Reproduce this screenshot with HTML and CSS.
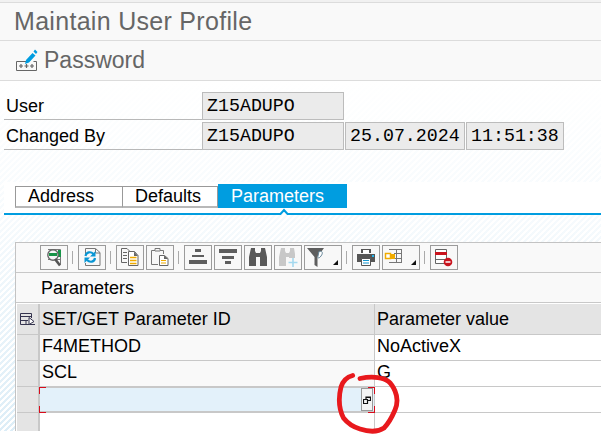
FILE: index.html
```html
<!DOCTYPE html>
<html lang="en">
<head>
<meta charset="utf-8">
<title>Maintain User Profile</title>
<link rel="stylesheet" href="styles.css">
</head>
<body>
<main class="window">
  <header class="titlebar"><h1>Maintain User Profile</h1></header>
  <div class="actions">
    <svg class="pw-icon" viewBox="0 0 22 22" width="22" height="22">
      <path d="M10 12.500H.5v9h20v-9h-3" fill="none" stroke="#666"/>
      <path d="M3 17h4M5 15v4M8.500 17h4M10.500 15v4M14 17h4M16 15v4" stroke="#666" stroke-width="1.200"/>
      <path d="M9 15l1-4 6.500-7 3 2.500-6.500 7zM17.500 2.500L19 .5l2.500 2.500-1.500 2z" fill="#009de0"/>
    </svg>
    <span>Password</span>
  </div>
  <section class="form">
    <div class="row"><label>User</label><span class="field name">Z15ADUPO</span></div>
    <div class="row"><label>Changed By</label><span class="field name">Z15ADUPO</span><span class="field date">25.07.2024</span><span class="field time">11:51:38</span></div>
  </section>
  <nav class="tabs">
    <div class="tab address"><span>Address</span></div>
    <div class="tab defaults"><span>Defaults</span></div>
    <div class="tab active"><span>Parameters</span></div>
    <svg class="notch" viewBox="0 0 10 7" width="10" height="7"><path d="M1 7l4-4.500L9 7z" fill="#fff"/><path d="M0 6h1.500L5 2l3.500 4H10" fill="none" stroke="#009de0" stroke-width="2"/></svg>
  </nav>
  <section class="panel">
    <div class="toolbar">
      <div class="btn"><svg viewBox="0 0 28 25"><path d="M8 4.500h12.500v15M8 7.500h13M8 14.500h13" stroke="#777" fill="none"/><path d="M18 5h3v7h-3z" fill="#169447"/><circle cx="13" cy="10" r="5.200" fill="#f6f6f6" stroke="#666" stroke-width="1.400"/><path d="M9 8h8v3H9z" fill="#169447"/><path d="M15 14l5 6.500" stroke="#555" stroke-width="2.600"/></svg></div>
      <i class="sep"></i>
      <div class="btn"><svg viewBox="0 0 28 25"><path d="M7.500 9V3.500h10l4.500 4v13H7.500V18M17.500 4v4H22" fill="none" stroke="#777"/><path d="M7.500 11c1-4 5-5 8-2M17 13c-.5 4-5 5-8 2" fill="none" stroke="#0996d4" stroke-width="2.200"/><path d="M17.500 6v5.500H12zM6.500 18v-5.500H12z" fill="#0996d4"/></svg></div>
      <i class="sep"></i>
      <div class="btn"><svg viewBox="0 0 28 25"><path d="M11 17.500H5.500v-14H11l2.500 2.500M7 7.500h4M7 10.500h4M7 13.500h4" fill="none" stroke="#666"/><path d="M12.500 6.500h6l3.500 4v10h-9.500z" fill="#fff" stroke="#666"/><path d="M18 6.500V11h4z" fill="#666"/><path d="M14 12.500h6.500M14 15.500h6.500M14 18.500h6.500" stroke="#f0ab00" stroke-width="1.500"/></svg></div>
      <div class="btn"><svg viewBox="0 0 28 25"><path d="M12 19.500H5.500v-14H9V3.500h5v2h3.500V9M9 6h5" fill="none" stroke="#777"/><path d="M13.500 10.500h5l3.500 3v7h-8.500z" fill="#fff" stroke="#666"/><path d="M18 10.500V14h4z" fill="#666"/><path d="M15 15.500h5M15 18h5" stroke="#f0ab00" stroke-width="1.200"/></svg></div>
      <i class="sep"></i>
      <div class="btn"><svg viewBox="0 0 28 25"><path d="M11 4h6v3h-6zM8 10h12v2H8zM5 15h18v4H5z" fill="#5e5e5e"/></svg></div>
      <div class="btn"><svg viewBox="0 0 28 25"><path d="M5 4h18v4H5zM8 11h12v3H8zM11 16h6v3h-6z" fill="#5e5e5e"/></svg></div>
      <div class="btn"><svg viewBox="0 0 28 25"><path d="M7 3h4v3l1 2h4l1-2V3h4l2 9v9h-7v-9h-4v9H5v-9z" fill="#595959"/></svg></div>
      <div class="btn"><svg viewBox="0 0 28 25"><path d="M7 3h4v3l1 2h3l1-2V3h4l1 6v4h-6v-1h-3v9H5v-9z" fill="#c8c8c8"/><path d="M19 13v9M14.500 17.500h9" stroke="#a5d9ef" stroke-width="1.600"/></svg></div>
      <div class="btn wide"><svg viewBox="0 0 38 25"><path d="M3 3h17l-6.500 9v10l-3-2v-8z" fill="#5e5e5e"/><path d="M15 6.500c4-1 4 2 2 4.500-2 3-4 2-3 0z" fill="#fff" stroke="#678799"/><path d="M34 15v5h-5z" fill="#111"/></svg></div>
      <i class="sep"></i>
      <div class="btn"><svg viewBox="0 0 28 25"><path d="M9 4h10v4H9zM5 9h18v8H5z" fill="#555"/><path d="M11 5h6v3h-6z" fill="#fff"/><path d="M9.500 13.500h9v7h-9z" fill="#fff" stroke="#555"/><path d="M11 15.500h6M11 18h6" stroke="#1496cf" stroke-width="1.200"/><path d="M20 11h2" stroke="#25b5ed" stroke-width="2"/></svg></div>
      <div class="btn wide"><svg viewBox="0 0 38 25"><path d="M7 4.500h13M12 8.500h8M12 13.500h8M7 17.500h13M14.500 4v14M19.500 4v14" fill="none" stroke="#777"/><path d="M3.500 8.500h5v5h-5z" fill="#fff" stroke="#f0ab00" stroke-width="1.500"/><path d="M8 9h5v5H8z" fill="#f0ab00"/><path d="M34 15v5h-5z" fill="#111"/></svg></div>
      <i class="sep"></i>
      <div class="btn"><svg viewBox="0 0 28 25"><path d="M5.500 4.500h11v14h-11zM6 14.500h10" fill="#fff" stroke="#666"/><path d="M5 7h12v3H5z" fill="#c9141e"/><circle cx="18" cy="17" r="4.300" fill="#c9141e"/><path d="M15.500 17h5" stroke="#fff" stroke-width="1.500"/></svg></div>
    </div>
    <div class="caption"><span>Parameters</span></div>
    <div class="grid head">
      <div class="select"><svg viewBox="0 0 16 14" width="16" height="14"><path d="M9 11.500H.5V.5h11V5M.5 3.500h11M.5 7.500H8M6 7.500v4M9 11.500h6" fill="none" stroke="#35344f"/><path d="M9 4.500l5 4-5 3z" fill="#fff" stroke="#35344f"/></svg></div>
      <div class="cell"><span>SET/GET Parameter ID</span></div><div class="cell"><span>Parameter value</span></div>
    </div>
    <div class="grid"><div class="select"></div><div class="cell key"><span>F4METHOD</span></div><div class="cell"><span>NoActiveX</span></div></div>
    <div class="grid"><div class="select"></div><div class="cell key"><span>SCL</span></div><div class="cell"><span>G</span></div></div>
    <div class="grid"><div class="select"></div>
      <div class="cell current"><div class="help"><svg viewBox="0 0 8 8" width="8" height="8"><path d="M.5 3.500h4v4h-4zM3 3V1h4.500v3.500H5M3 1.500h5" fill="none" stroke="#111" stroke-width="1.200"/></svg></div>
        <i class="corner tl"></i><i class="corner tr"></i><i class="corner bl"></i><i class="corner br"></i></div>
      <div class="cell"></div></div>
    <div class="grid last"><div class="select"></div><div class="cell"></div><div class="cell"></div></div>
  </section>
  <svg class="mark" viewBox="0 0 66 64" width="66" height="64"><path d="M17.700 5.500C12 7 8 10.500 6 17C3.500 27 3.500 38 8.500 48C14 55 20 57.500 25 59C34 62 43 62 49 58C55 52 57 47 60 40C63 33 63 28 60 21C56 12 52 9 43 7.700C37 6.500 32 7 25 8.500" fill="none" stroke="#e8191d" stroke-width="4.800" stroke-linecap="round" stroke-linejoin="round"/></svg>
</main>
</body>
</html>
```
FILE: styles.css
```css
* { box-sizing: border-box; }
body { margin: 0; overflow: hidden; font-family: "Liberation Sans", Arial, sans-serif; font-size: 18px; color: #000; }
.window {
  position: relative; width: 601px; height: 434px; overflow: hidden;
  background: linear-gradient(#fff 431px, #fff) 0 431px / 100% 3px no-repeat,
    linear-gradient(#fff 80px, rgba(255,255,255,.75) 220px, rgba(255,255,255,0) 434px),
    repeating-linear-gradient(135deg, #fff 0 2.120px, #dcedf7 2.120px 4.240px);
}
.titlebar { height: 41px; border-top: 2px solid #f1f1f1; border-bottom: 1px solid #dcdcdc; background: #f9f9f9; box-shadow: inset 0 1px #dcdcdc; padding-left: 14px; }
h1 { margin: 0; font-size: 25px; font-weight: 400; line-height: 38px; color: #666; letter-spacing: .3px; }
.actions { height: 40px; border-bottom: 1px solid #dcdcdc; background: #f9f9f9; display: flex; padding-left: 16px; gap: 6px; color: #666; font-size: 23px; line-height: 38px; }
.pw-icon { margin-top: 8px; }
.form { height: 101px; padding: 11px 0 0 4px; display: flex; flex-direction: column; gap: 2px; }
.row { height: 28px; display: flex; gap: 1px; }
.row label { width: 198px; margin-right: -1px; border-bottom: 1px solid #b8b8b8; padding-left: 2px; line-height: 28px; }
.field { border: 1px solid #bcbcbc; background: #ebebeb; padding-left: 4px; line-height: 27px; font-family: "Liberation Mono", monospace; font-size: 18.300px; white-space: nowrap; }
.name { width: 142px; }
.date { width: 120px; }
.time { width: 98px; }
.tabs { position: relative; height: 33px; margin-left: 4px; padding-left: 11px; border-bottom: 2px solid #009de0; background: #fff; display: flex; align-items: flex-start; }
.tab { height: 22px; margin-top: 4px; line-height: 19px; border: 1px solid #999; border-bottom: 2px solid #b8b8b8; }
.address { width: 107px; padding-left: 12px; border-right: 0; }
.defaults { width: 96px; padding-left: 12px; }
.active { width: 129px; height: 24px; margin-top: 2px; padding-left: 13px; border: 0; line-height: 24px; background: #009de0; color: #fff; }
.notch { position: absolute; left: 275px; top: 26px; }
.panel { margin: 27px 0 0 15px; height: 189px; border: 1px solid #c3c3c3; border-right: 0; border-bottom: 0; background: #f9f9f9; }
.toolbar { height: 30px; border-bottom: 1px solid #c8c8c8; display: flex; gap: 2px; padding: 2px 0 0 24px; }
.btn { width: 28px; height: 25px; border: 1px solid #9b9b9b; background: #f8f8f8; }
.btn svg { display: block; width: 28px; height: 25px; margin: -1px; }
.btn.wide { width: 38px; }
.btn.wide svg { width: 38px; }
.sep { width: 1px; height: 13px; margin: 6px 3px 0 2px; background: #aaa; }
.caption { height: 30px; border-bottom: 1px solid #c8c8c8; padding-left: 25px; line-height: 30px; }
.grid { height: 26px; display: grid; grid-template-columns: 23px 335px 1fr; padding-left: 1px; background: #fff; }
.select { background: #e4e4e4; border-right: 2px solid #c8c8c8; border-bottom: 1px solid #c8c8c8; }
.cell { position: relative; min-width: 0; border-right: 1px solid #c8c8c8; border-bottom: 1px solid #c8c8c8; padding-left: 2px; line-height: 23px; white-space: nowrap; }
.cell + .cell { border-right: 0; }
.grid.head { height: 32px; padding-top: 1px; }
.head .cell { background: #e4e4e4; line-height: 30px; }
.head .select { padding: 9px 0 0 3px; }
.head svg { display: block; }
.key { background: #f9f9f9; }
.current { background: #e3f1fa; border-top: 1px solid #c8c8c8; border-bottom: 2px solid #c8c8c8; display: flex; justify-content: flex-end; padding-right: 1px; }
.help { width: 12px; height: 23px; border: 1px solid #999; background: #f4f4f4; display: flex; align-items: center; justify-content: center; }
.help svg { flex: none; }
.corner { position: absolute; width: 7px; height: 7px; border: 0 solid #d80b1b; }
.tl { left: -1px; top: -1px; border-width: 1px 0 0 1px; }
.tr { right: -1px; top: -1px; border-width: 1px 1px 0 0; }
.bl { left: -1px; bottom: -2px; border-width: 0 0 1px 1px; }
.br { right: -1px; bottom: -2px; border-width: 0 1px 1px 0; }
.last { height: 18px; }
.last .select, .last .cell { border-bottom: 0; }
.mark { position: absolute; left: 335px; top: 370px; }
```
